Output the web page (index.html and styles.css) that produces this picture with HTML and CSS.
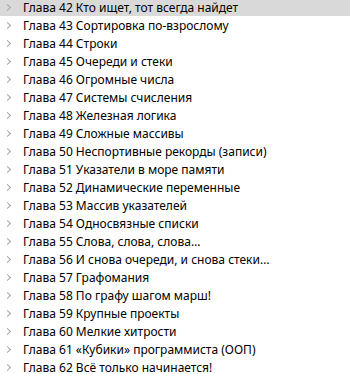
FILE: index.html
```html
<!DOCTYPE html>
<html lang="ru">
  <head>
    <meta charset="UTF-8" />
    <title>Оглавление</title>
    <link rel="stylesheet" href="styles.css">
  </head>
  <body>
    <ul class="tree">
      <li class="node selected"><span class="arrow"></span>Глава 42 Кто ищет, тот всегда найдет</li>
      <li class="node"><span class="arrow"></span>Глава 43 Сортировка по-взрослому</li>
      <li class="node"><span class="arrow"></span>Глава 44 Строки</li>
      <li class="node"><span class="arrow"></span>Глава 45 Очереди и стеки</li>
      <li class="node"><span class="arrow"></span>Глава 46 Огромные числа</li>
      <li class="node"><span class="arrow"></span>Глава 47 Системы счисления</li>
      <li class="node"><span class="arrow"></span>Глава 48 Железная логика</li>
      <li class="node"><span class="arrow"></span>Глава 49 Сложные массивы</li>
      <li class="node"><span class="arrow"></span>Глава 50 Неспортивные рекорды (записи)</li>
      <li class="node"><span class="arrow"></span>Глава 51 Указатели в море памяти</li>
      <li class="node"><span class="arrow"></span>Глава 52 Динамические переменные</li>
      <li class="node"><span class="arrow"></span>Глава 53 Массив указателей</li>
      <li class="node"><span class="arrow"></span>Глава 54 Односвязные списки</li>
      <li class="node"><span class="arrow"></span>Глава 55 Слова, слова, слова…</li>
      <li class="node"><span class="arrow"></span>Глава 56 И снова очереди, и снова стеки…</li>
      <li class="node"><span class="arrow"></span>Глава 57 Графомания</li>
      <li class="node"><span class="arrow"></span>Глава 58 По графу шагом марш!</li>
      <li class="node"><span class="arrow"></span>Глава 59 Крупные проекты</li>
      <li class="node"><span class="arrow"></span>Глава 60 Мелкие хитрости</li>
      <li class="node"><span class="arrow"></span>Глава 61 «Кубики» программиста (ООП)</li>
      <li class="node"><span class="arrow"></span>Глава 62 Всё только начинается!</li>
    </ul>
  </body>
</html>
```

FILE: styles.css
```css
body {
  margin: 0;
  background-color: white;
  overflow: hidden;
}
.tree {
  list-style: none;
  margin: -2px 0 0 0;
  padding: 0;
  font-family: "Noto Sans", sans-serif;
  font-size: 12px;
  color: black;
}
.node {
  display: flex;
  align-items: center;
  height: 18px;
  white-space: nowrap;
}
.node.selected {
  background-color: #d9d9d9;
}
.arrow {
  width: 23px;
  height: 18px;
  flex-shrink: 0;
  position: relative;
}
.arrow::before {
  content: "";
  position: absolute;
  left: 5px;
  top: 6.5px;
  width: 4px;
  height: 4px;
  border-right: 1.5px solid #a6a6a6;
  border-top: 1.5px solid #a6a6a6;
  transform: rotate(45deg);
}
```
